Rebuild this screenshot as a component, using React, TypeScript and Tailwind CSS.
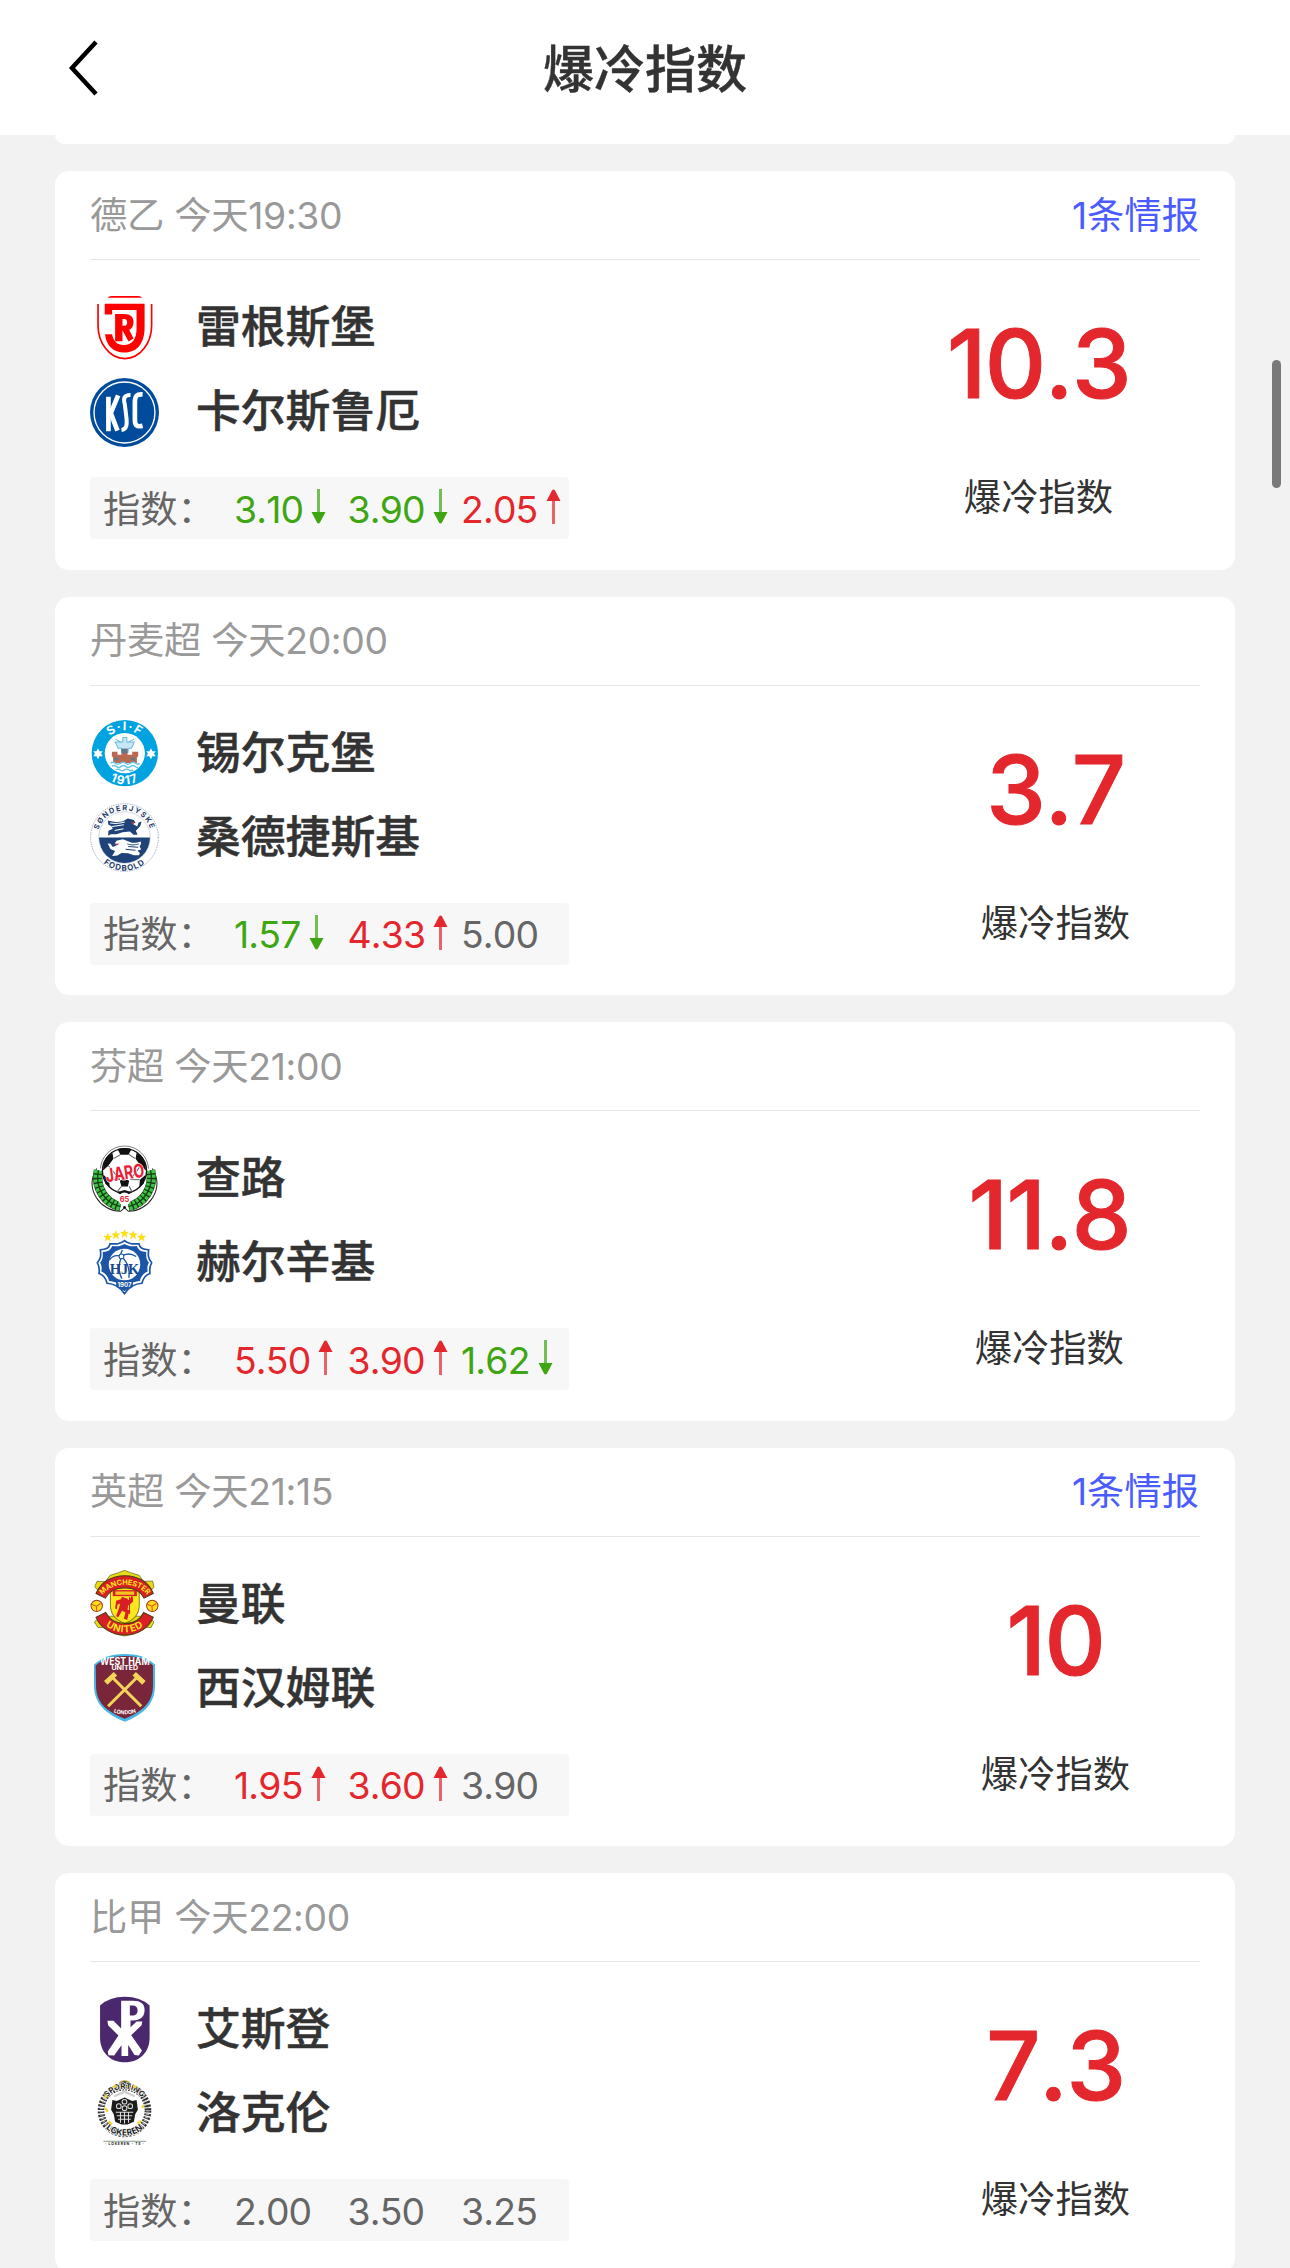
import React from 'react';

type Trend = 'up' | 'down' | 'flat';

interface Odd {
  value: string;
  trend: Trend;
}

interface Team {
  name: string;
  crest: React.FC;
}

interface Match {
  league: string;
  time: string;
  intel?: string;
  home: Team;
  away: Team;
  odds: Odd[];
  score: string;
}

const Crest = ({ children }: { children: React.ReactNode }) => (
  <svg className="w-[69px] h-[69px] shrink-0" viewBox="0 0 206 206" fontFamily="Inter, sans-serif" fontWeight="700" textAnchor="middle">
    {children}
  </svg>
);

const RegensburgCrest = () => (
  <Crest>
    <path d="M52 11q4-5 12-5h80q8 0 12 5z" fill="#f00" />
    <path d="M24 30v64c0 52 34 99 80 99s80-47 80-99V30" fill="none" stroke="#f00" strokeWidth="5" />
    <path d="M44 29h119v72c0 46-22 74-60 74-34 0-55-22-58-55h21c4 21 15 32 34 32 27 0 39-18 39-50V48H66v13H44z" fill="#f00" />
    <path d="M75 60h27c19 0 28 9 28 24 0 12-5 19-13 23l13 26-15 9-18-34v33H75zM97 75v20h4c7 0 10-3 10-10s-3-10-10-10z" fill="#f00" fillRule="evenodd" />
  </Crest>
);

const KarlsruheCrest = () => (
  <Crest>
    <circle cx="103" cy="103" r="103" fill="#004b9b" />
    <circle cx="103" cy="103" r="91" fill="none" stroke="#fff" strokeWidth="4" />
    <g fill="none" stroke="#fff" strokeWidth="14">
      <path d="M55 56v103" />
      <path d="M84 52L62 105l20 52" />
      <path d="M121 51c-20 0-22 10-17 28l5 42c2 22-1 32-15 34" strokeWidth="12" />
      <path d="M157 49c-19-1-23 6-23 24v50c0 18 4 24 23 20" strokeWidth="14" />
    </g>
  </Crest>
);

const SilkeborgCrest = () => (
  <Crest>
    <circle cx="104" cy="102" r="99" fill="#00a3e0" />
    <circle cx="104" cy="102" r="60" fill="#fff" />
    <path id="sif-top" d="M36 102a68 68 0 0 1 136 0" fill="none" />
    <path id="sif-bottom" d="M11 102a93 93 0 0 0 186 0" fill="none" />
    <text fill="#fff" fontSize="36" letterSpacing="4"><textPath href="#sif-top" startOffset="50%">S·I·F</textPath></text>
    <text fill="#fff" fontSize="36" letterSpacing="4"><textPath href="#sif-bottom" startOffset="50%">1917</textPath></text>
    <g fill="#fff">
      <path d="M24 87l4 9h10l-5 7 5 8H28l-4 9-5-9h-9l5-8-5-7h9z" />
      <path d="M182 87l4 9h10l-5 7 5 8h-10l-4 9-5-9h-9l5-8-5-7h9z" />
    </g>
    <path d="M98 55h12v14h22l-8 18h-10v12H94V87H84l-9-18h23zM94 70l-18-10M112 70l20-10" fill="#c5e8f4" stroke="#68bddb" strokeWidth="3" />
    <path d="M66 98h16v9h12V89h18v18h14v-9h18v12l-4 6v15H69v-15l-4-6z" fill="#b96852" />
    <path d="M94 89h18v13H94zM73 116h12v8H73zM122 116h12v8h-12z" fill="#62798c" />
    <path d="M61 132q8-6 15 0t15 0 15 0 15 0 15 0 12 0M65 142q7-6 14 0t14 0 14 0 14 0 14 0 8 0M77 152q7-5 13 0t13 0 13 0 13 0" fill="none" stroke="#68c6e4" strokeWidth="4" />
  </Crest>
);

const SonderjyskeCrest = () => (
  <Crest>
    <circle cx="103" cy="103" r="101" fill="#fff" stroke="#6d84ad" strokeWidth="2" strokeDasharray="4 3" />
    <circle cx="103" cy="103" r="77" fill="#fff" stroke="#b9c5d8" strokeWidth="2" />
    <path d="M27 103h152a76 76 0 0 1-152 0z" fill="#1f4379" />
    <path id="sj-top" d="M22 103a81 81 0 0 1 162 0" fill="none" />
    <path id="sj-bottom" d="M4 103a99 99 0 0 0 198 0" fill="none" />
    <text fill="#1f3b6d" fontSize="22" letterSpacing="4"><textPath href="#sj-top" startOffset="50%">SØNDERJYSKE</textPath></text>
    <text fill="#1f3b6d" fontSize="24" letterSpacing="3"><textPath href="#sj-bottom" startOffset="50%">FODBOLD</textPath></text>
    <path d="M53 52c14 4 30 6 43 3l17-9 18 5 5 8-9 3 14 8 4-12 9-3-4 14-13 14 5 12h-12l-11-10-22 2-18 6H62l-8 5 1-15 13-6-4-8-9-4z" fill="#1f4379" />
    <path d="M60 60c16 2 31 1 44-3M66 70l35-5M74 82l26-5" stroke="#fff" strokeWidth="3" fill="none" />
    <path d="M120 58l14-1-4 5z" fill="#e5323c" />
    <path d="M152 115c-14 4-25 6-37 0l-17-7-19 5-5 8 9 4-15 6-7-9-8-1 8 16 14 6-9 15 16-1 12-8 20 1 17 6h15l3-6-7-8 11-3-5-9 4-7z" fill="#fff" />
    <path d="M146 122c-12 4-24 4-35 0M144 132l-30-2M136 141l-30-3" stroke="#1f4379" strokeWidth="3" fill="none" />
    <path d="M73 122l14-1-4 5z" fill="#e5323c" />
  </Crest>
);

const JaroCrest = () => (
  <Crest>
    <circle cx="103" cy="75" r="72" fill="#fff" stroke="#444" strokeWidth="2" />
    <path d="M20 70c-38 62 12 128 71 128l12-10 12 10c59 0 109-66 71-128" fill="#fff" stroke="#222" strokeWidth="3" />
    <path d="M25 76C14 129 46 174 91 184M181 76c11 53-21 98-66 108" fill="none" stroke="#173d18" strokeWidth="28" />
    <path d="M25 76C14 129 46 174 91 184M181 76c11 53-21 98-66 108" fill="none" stroke="#3fc441" strokeWidth="25" strokeDasharray="9 4" />
    <path d="M25 76C14 129 46 174 91 184M181 76c11 53-21 98-66 108" fill="none" stroke="#123f16" strokeWidth="4" />
    <circle cx="103" cy="77" r="66" fill="#fff" stroke="#111" strokeWidth="4" />
    <path d="M82 12q22-6 42 0l-9 17H91zM40 57l10-21 17-12 3 17-16 22-15 13zM166 57l-10-21-17-12-3 17 16 22 15 13zM89 107l14-7 14 7-4 17H94zM40 89l17 15 2 22-13-10zM166 89l-17 15-2 22 13-10zM80 141l23-7 23 7-16 9H94z" fill="#111" />
    <path d="M92 28L72 40M116 28l18 12M55 62l34 41M151 62l-30 41M58 104l31-1M148 104l-27-1M94 123l-14 18M117 123l9 18" stroke="#555" strokeWidth="3" />
    <text x="104" y="103" fill="#ed1c35" stroke="#fff" strokeWidth="4" paintOrder="stroke" fontSize="56" transform="rotate(-8 104 84)" textLength="116" lengthAdjust="spacingAndGlyphs">JARO</text>
    <circle cx="103" cy="161" r="19" fill="#fff" />
    <text x="103" y="169" fill="#ed1c35" fontSize="22">65</text>
    <circle cx="103" cy="186" r="4" fill="#111" />
  </Crest>
);

const STAR = 'M0-12l3 8 9 0-7 6 3 9-8-6-8 6 3-9-7-6 9 0z';

const HelsinkiCrest = () => (
  <Crest>
    <g fill="#ffe100" stroke="#e5c900" strokeWidth="1">
      <path d={STAR} transform="translate(53 25)" />
      <path d={STAR} transform="translate(77 18)" />
      <path d={STAR} transform="translate(103 14)" />
      <path d={STAR} transform="translate(129 18)" />
      <path d={STAR} transform="translate(154 25)" />
    </g>
    <path
      d="M103 35c12 11 26 10 43 9 2 13 10 18 29 18-2 16-2 26 9 39-8 13-6 23-5 32-13 4-20 12-24 29-18 1-38 11-52 31-14-20-34-30-52-31-4-17-11-25-24-29 1-9 3-19-5-32 11-13 11-23 9-39 19 0 27-5 29-18 17 1 31 2 43-9z"
      fill="#fff" stroke="#1b55a6" strokeWidth="5"
    />
    <path
      d="M103 45c12 8 25 7 37 6 4 12 12 17 28 18-1 14 0 22 8 32-6 9-5 16-4 26-12 5-19 13-23 28-17 1-33 8-46 23-13-15-29-22-46-23-4-15-11-23-23-28 1-10 2-17-4-26 8-10 9-18 8-32 16-1 24-6 28-18 12 1 25 2 37-6z"
      fill="#1b55a6"
    />
    <circle cx="103" cy="106" r="47" fill="#fff" />
    <path d="M94 82c-18-6-29 0-36 11M94 82c16-12 34-6 44 0M94 82c-4-8-1-14 3-20M94 82c-8 20-11 43 1 66M94 82c17 15 26 33 22 64" fill="none" stroke="#1b55a6" strokeWidth="4" />
    <circle cx="94" cy="82" r="7" fill="#fff" stroke="#1b55a6" strokeWidth="3" />
    <text x="103" y="134" fill="#17498f" fontFamily="'Liberation Serif', serif" fontSize="46" textLength="88" lengthAdjust="spacingAndGlyphs">HJK</text>
    <path d="M78 155h50v18q-13 3-25 13-12-10-25-13z" fill="#1b55a6" />
    <text x="103" y="172" fill="#fff" fontSize="18">1907</text>
  </Crest>
);

const ManUnitedCrest = () => (
  <Crest>
    <path d="M103 1l18 7 26 8 12 18 28-1 4 18-13 14H28L14 50l7-16 25 1 14-19 25-8zM33 138h140l18 17-9 17-28-2-20 20-31 7-31-7-20-20-28 2-11-17z" fill="#e8dc18" stroke="#5c5713" strokeWidth="2" />
    <path d="M61 54h86v51c0 26-15 44-43 54-28-10-43-28-43-54z" fill="#ffe51d" stroke="#8a7f18" strokeWidth="3" />
    <path d="M68 60h72v18H68z" fill="#d91f26" />
    <path d="M76 64h56v10H76z" fill="#f2c322" />
    <path d="M96 80l13 5 9 6 5-13 5 1-2 18-12 9-2 12 9 5-5 5-5 21-10-4 5-18-10-5-12 19-6-3 9-25 3-13-8 4-2 13-5-2 3-23 14-5z" fill="#d91f26" />
    <path d="M118 81v50M110 84v10h17V84" stroke="#d91f26" strokeWidth="3" fill="none" />
    <path d="M18 70C32 36 64 17 104 17s72 19 85 53l-28 14C151 63 130 53 104 53S57 63 46 84z" fill="#d91f26" stroke="#4c3a13" strokeWidth="3" />
    <path d="M18 141c15 34 48 53 86 53s70-19 85-53l-29-14c-10 22-30 33-56 33s-46-11-57-33z" fill="#d91f26" stroke="#4c3a13" strokeWidth="3" />
    <path id="mu-top" d="M26 108a78 64 0 0 1 156 0" fill="none" />
    <path id="mu-bottom" d="M20 115a84 71 0 0 0 168 0" fill="none" />
    <text fill="#ffe51d" fontSize="22" letterSpacing="-0.5"><textPath href="#mu-top" startOffset="50%">MANCHESTER</textPath></text>
    <text fill="#ffe51d" fontSize="29" letterSpacing="2"><textPath href="#mu-bottom" startOffset="50%">UNITED</textPath></text>
    <g stroke="#a43a1d" strokeWidth="3">
      <circle cx="20" cy="107" r="17" fill="#ffdf16" />
      <circle cx="186" cy="107" r="17" fill="#ffdf16" />
      <path d="M6 103l13 5 13-8M19 108l1 14M172 103l13 5 13-8M185 108l1 14" fill="none" stroke="#e04d20" />
    </g>
  </Crest>
);

const WestHamCrest = () => (
  <Crest>
    <path d="M12 31C40 8 66 0 104 0s62 8 90 31v62c0 54-31 85-90 109C45 178 12 147 12 93z" fill="#45b8e8" />
    <path d="M17 34C42 14 69 6 104 6s60 8 84 28v59c0 49-27 77-84 100C45 170 18 142 18 93z" fill="#7a263a" />
    <text x="104" y="33" fill="#fff" fontSize="29" textLength="148" lengthAdjust="spacingAndGlyphs">WEST HAM</text>
    <text x="104" y="48" fill="#fff" fontSize="19" textLength="80" lengthAdjust="spacingAndGlyphs">UNITED</text>
    <g stroke="#f3d459" strokeWidth="9">
      <path d="M67 70l86 86M140 70l-86 86" />
      <path d="M47 86l29-27M132 59l29 27" strokeWidth="15" />
    </g>
    <path id="wh-bottom" d="M66 172q38 16 76 0" fill="none" />
    <text fill="#fff" fontSize="16"><textPath href="#wh-bottom" startOffset="50%">LONDON</textPath></text>
  </Crest>
);

const PatroCrest = () => (
  <Crest>
    <path d="M30 28Q58 2 104 2t74 26v96c0 43-29 74-74 74s-74-31-74-74z" fill="#4b286d" />
    <path d="M93 14h35c25 0 35 10 35 28 0 20-12 31-35 31h-7v20l18-17h17l-2 11-31 30 32 46-9 15-13-2-19-30v33H94v-32l-22 31-17-1-2-11 32-48-31-31-2-13h18l23 23zM119 28v30h7c11 0 16-5 16-15s-5-15-16-15z" fill="#fff" fillRule="evenodd" />
  </Crest>
);

const LokerenCrest = () => (
  <Crest>
    <circle cx="103" cy="91" r="70" fill="none" stroke="#333" strokeWidth="20" strokeDasharray="6 4" />
    <circle cx="103" cy="91" r="69" fill="none" stroke="#bbb" strokeWidth="10" strokeDasharray="3 7" />
    <circle cx="103" cy="91" r="59" fill="#fff" />
    <ellipse cx="103" cy="11" rx="16" ry="9" fill="#333" stroke="#cabb42" strokeWidth="3" />
    <path id="lk-top" d="M42 84a61 58 0 0 1 122 0" fill="none" />
    <path id="lk-bottom" d="M27 100a76 66 0 0 0 152 0" fill="none" />
    <text fill="#222" stroke="#fff" strokeWidth="4" paintOrder="stroke" fontSize="23"><textPath href="#lk-top" startOffset="50%">SPORTING</textPath></text>
    <text fill="#222" stroke="#fff" strokeWidth="4" paintOrder="stroke" fontSize="26"><textPath href="#lk-bottom" startOffset="50%">LOKEREN</textPath></text>
    <path d="M69 22l9-5M129 17l10 5M45 83l8 12M155 83l6-8M50 45l-6 8M142 130l11-8M55 124l10 8" stroke="#efd638" strokeWidth="7" />
    <path d="M72 49l31-14 31 14" fill="none" stroke="#ccc" strokeWidth="6" />
    <path d="M67 60l13 3 23-11 23 11 13-3 4 29-8 13-4 23-19 8H94l-19-8-4-23-8-13z" fill="#1c1c1c" />
    <g fill="none" stroke="#ddd" strokeWidth="3">
      <circle cx="103" cy="65" r="7" />
      <circle cx="86" cy="78" r="7" />
      <circle cx="120" cy="78" r="7" />
      <circle cx="103" cy="84" r="7" />
      <path d="M77 96h52M80 107h46M84 117h38M91 96v32M103 94v36M115 96v32" />
    </g>
    <path d="M40 183h128" stroke="#4c7058" strokeWidth="2" />
    <text x="103" y="195" fill="#111" fontSize="10" textLength="116">· LOKEREN - TE ·</text>
  </Crest>
);

const matches: Match[] = [
  {
    league: '德乙',
    time: '今天19:30',
    intel: '1条情报',
    home: { name: '雷根斯堡', crest: RegensburgCrest },
    away: { name: '卡尔斯鲁厄', crest: KarlsruheCrest },
    odds: [
      { value: '3.10', trend: 'down' },
      { value: '3.90', trend: 'down' },
      { value: '2.05', trend: 'up' },
    ],
    score: '10.3',
  },
  {
    league: '丹麦超',
    time: '今天20:00',
    home: { name: '锡尔克堡', crest: SilkeborgCrest },
    away: { name: '桑德捷斯基', crest: SonderjyskeCrest },
    odds: [
      { value: '1.57', trend: 'down' },
      { value: '4.33', trend: 'up' },
      { value: '5.00', trend: 'flat' },
    ],
    score: '3.7',
  },
  {
    league: '芬超',
    time: '今天21:00',
    home: { name: '查路', crest: JaroCrest },
    away: { name: '赫尔辛基', crest: HelsinkiCrest },
    odds: [
      { value: '5.50', trend: 'up' },
      { value: '3.90', trend: 'up' },
      { value: '1.62', trend: 'down' },
    ],
    score: '11.8',
  },
  {
    league: '英超',
    time: '今天21:15',
    intel: '1条情报',
    home: { name: '曼联', crest: ManUnitedCrest },
    away: { name: '西汉姆联', crest: WestHamCrest },
    odds: [
      { value: '1.95', trend: 'up' },
      { value: '3.60', trend: 'up' },
      { value: '3.90', trend: 'flat' },
    ],
    score: '10',
  },
  {
    league: '比甲',
    time: '今天22:00',
    home: { name: '艾斯登', crest: PatroCrest },
    away: { name: '洛克伦', crest: LokerenCrest },
    odds: [
      { value: '2.00', trend: 'flat' },
      { value: '3.50', trend: 'flat' },
      { value: '3.25', trend: 'flat' },
    ],
    score: '7.3',
  },
];

const trendColor: Record<Trend, string> = {
  up: 'text-[#e3272d]',
  down: 'text-[#3ea513]',
  flat: 'text-[#666]',
};

const TrendArrow = ({ trend }: { trend: Trend }) => (
  <svg className={`w-[15px] h-[35px] ml-[8px] -mt-[6px] shrink-0 ${trend === 'up' ? 'rotate-180' : ''}`} viewBox="0 0 15 35">
    <path d="M7.5 0v26" stroke="currentColor" strokeWidth="3" opacity="0.7" />
    <path d="M0.5 23h14l-5.500 10.500q-1.500 2-3 0z" fill="currentColor" />
  </svg>
);

const TeamRow = ({ team }: { team: Team }) => (
  <div className="flex items-center h-[84px]">
    <team.crest />
    <span className="ml-[37px] mb-0.5 text-[44.800px] leading-[60px] font-medium text-[#333] [-webkit-text-stroke:0.5px_#333]">{team.name}</span>
  </div>
);

const MatchCard = ({ match }: { match: Match }) => (
  <section className="h-[398.600px] shrink-0 px-[35px] rounded-[14px] bg-white">
    <div className="flex items-center justify-between h-[89px] pt-px border-b border-[#e6e6e6] text-[37.300px]">
      <span className="text-[#999] tracking-[-0.3px]">{match.league} {match.time}</span>
      {match.intel && <span className="mr-px text-[#4a5cff]">{match.intel}</span>}
    </div>
    <div className="flex justify-between">
      <div className="pt-[26px]">
        <TeamRow team={match.home} />
        <TeamRow team={match.away} />
        <div className="flex items-center w-[479px] h-[62px] mt-[23px] pt-[3px] pl-[13px] rounded-[4px] bg-[#f7f7f7] text-[37.300px]">
          <span className="w-[131px] shrink-0 text-[#666]">指数：</span>
          {match.odds.map((odd, i) => (
            <span key={i} className={`flex items-center w-[113.500px] shrink-0 tracking-[-0.8px] ${trendColor[odd.trend]}`}>
              {odd.value}
              {odd.trend !== 'flat' && <TrendArrow trend={odd.trend} />}
            </span>
          ))}
        </div>
      </div>
      <div className="flex flex-col items-center pt-[54px] pr-[70px]">
        <span className="text-[95px] leading-[100px] font-medium tracking-[-1.500px] text-[#e3272d] [-webkit-text-stroke:1px_#e3272d]">{match.score}</span>
        <span className="mt-[64px] text-[37.300px] leading-[40px] text-[#333]">爆冷指数</span>
      </div>
    </div>
  </section>
);

export default function App() {
  return (
    <div className="relative flex flex-col w-[1290px] h-[2268px] overflow-hidden bg-[#f2f2f2] font-['Inter','Noto_Sans_CJK_SC',sans-serif] [font-kerning:none]">
      <header className="grid grid-cols-[1fr_auto_1fr] items-center h-[135px] shrink-0 px-[68px] bg-white">
        <svg className="w-[32px] h-[56px]" viewBox="0 0 32 56" fill="none" stroke="#000" strokeWidth="4.500">
          <path d="M28 2L4 28l24 26" />
        </svg>
        <h1 className="pt-[4px] text-[51px] leading-[70px] font-medium text-[#333] [-webkit-text-stroke:0.4px_#333]">爆冷指数</h1>
      </header>

      <main className="flex flex-col gap-[27px] px-[55px]">
        {/* tail of the card scrolled under the header */}
        <div className="h-[9px] shrink-0 rounded-b-[14px] bg-white" />
        {matches.map((match) => (
          <MatchCard key={match.league} match={match} />
        ))}
      </main>

      {/* Scroll indicator */}
      <div className="absolute top-[360px] right-[9px] w-[9px] h-[128px] rounded-full bg-[#797979]" />
    </div>
  );
}
